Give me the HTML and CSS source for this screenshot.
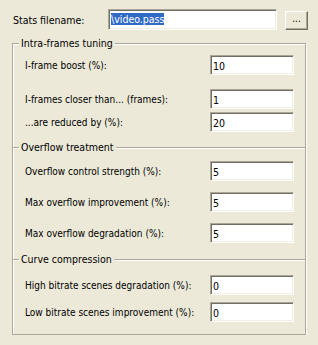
FILE: index.html
```html
<!DOCTYPE html>
<html>
<head>
  <meta charset="UTF-8">
  <title>Two-pass settings</title>
  <link rel="stylesheet" href="styles.css">
</head>
<body>
  <div class="page">
    <div class="file-row">
      <label class="file-label">Stats filename:</label>
      <div class="field file-field"><span class="selected">\video.pass</span></div>
      <button class="browse">...</button>
    </div>

    <div class="group">
      <div class="section intra">
        <div class="legend">Intra-frames tuning</div>
        <div class="row r1"><label>I-frame boost (%):</label><input type="text" value="10"></div>
        <div class="row r2"><label>I-frames closer than... (frames):</label><input type="text" value="1"></div>
        <div class="row r3"><label>...are reduced by (%):</label><input type="text" value="20"></div>
      </div>
      <div class="section overflow">
        <div class="legend">Overflow treatment</div>
        <div class="row r1"><label>Overflow control strength (%):</label><input type="text" value="5"></div>
        <div class="row r2"><label>Max overflow improvement (%):</label><input type="text" value="5"></div>
        <div class="row r3"><label>Max overflow degradation (%):</label><input type="text" value="5"></div>
      </div>
      <div class="section curve">
        <div class="legend">Curve compression</div>
        <div class="row r1"><label>High bitrate scenes degradation (%):</label><input type="text" value="0"></div>
        <div class="row r2"><label>Low bitrate scenes improvement (%):</label><input type="text" value="0"></div>
      </div>
    </div>
  </div>
</body>
</html>
```
FILE: styles.css
```css
body {
  margin: 0;
  background: #ece9d8;
  font-family: "DejaVu Sans Condensed", "Liberation Sans", Arial, sans-serif;
  font-size: 10px;
  color: #000;
}
.page {
  padding: 9px 0 0 12px;
}
.file-row {
  display: flex;
  align-items: center;
  height: 21px;
}
.file-label {
  width: 95px;
  margin-left: 1px;
  font-size: 10.5px;
}
.field, .row input {
  box-sizing: border-box;
  border: 1px solid;
  border-color: #aca899 #fff #fff #aca899;
  box-shadow: inset 1px 1px #716f64, inset -1px -1px #f1efe2;
  background: #fff;
  font: inherit;
  color: #000;
}
.file-field {
  width: 169px;
  height: 21px;
  padding: 3px 0 0 2px;
  line-height: 13px;
  font-size: 10.5px;
}
.selected {
  background: #316ac5;
  color: #fff;
}
.browse {
  box-sizing: border-box;
  width: 23px;
  height: 19px;
  margin: 1px 0 0 8px;
  padding: 0 0 3px;
  border: 1px solid;
  border-color: #fff #716f64 #716f64 #fff;
  box-shadow: inset -1px -1px #aca899;
  background: #ece9d8;
  font: inherit;
  line-height: 10px;
}
.group {
  width: 294px;
  box-sizing: border-box;
  margin-top: 13px;
  border: 1px solid #aca899;
  border-top: none;
  box-shadow: inset 1px 0 #fff, 1px 1px #fff;
}
.section {
  border-top: 1px solid #aca899;
  box-shadow: inset 0 1px #fff;
  padding: 0 11px 0 12px;
}
.legend {
  display: table;
  margin: -7px 0 0 -6px;
  padding: 0 2px;
  line-height: 13px;
  background: #ece9d8;
  font-size: 10.5px;
}
.row {
  display: flex;
  align-items: center;
  height: 20px;
}
.row label {
  flex: 1;
  white-space: nowrap;
}
.row input {
  width: 84px;
  height: 20px;
  padding: 1px 0 0 2px;
  outline: none;
  font-size: 10.5px;
}

.intra { padding-bottom: 15px; }
.intra .r1 { margin-top: 5px; }
.intra .r2 { margin-top: 14px; }
.intra .r3 { margin-top: 3px; }

.overflow { padding-bottom: 16px; }
.overflow .r1 { margin-top: 7px; }
.overflow .r2 { margin-top: 11px; }
.overflow .r3 { margin-top: 11px; }

.curve { padding-bottom: 12px; }
.curve .r1 { margin-top: 9px; }
.curve .r2 { margin-top: 7px; }
```
